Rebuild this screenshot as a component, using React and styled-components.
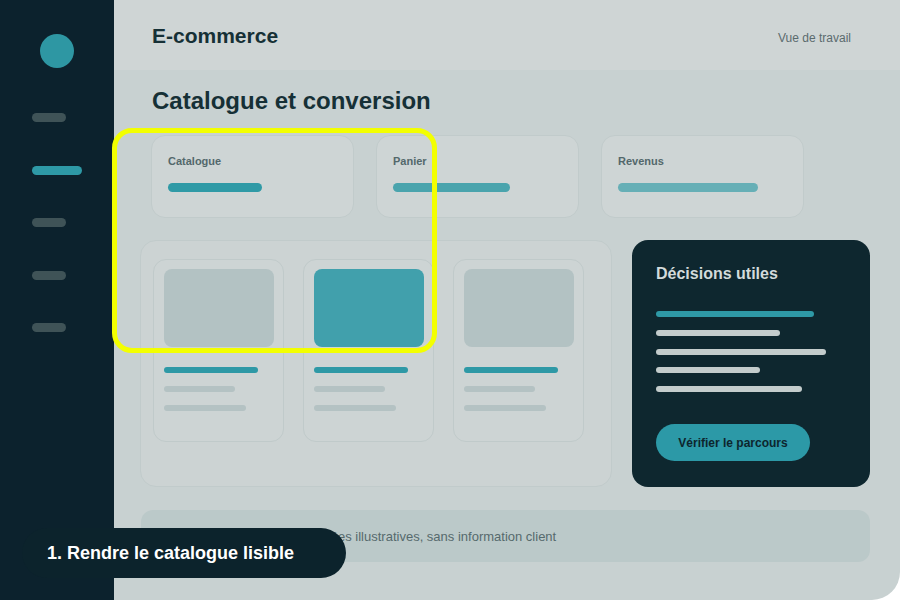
import React from "react";
import styled, { createGlobalStyle } from "styled-components";

const Global = createGlobalStyle`
  html, body { margin: 0; padding: 0; background: #ffffff; }
  body { font-family: "Liberation Sans", Arial, sans-serif; }
  * { box-sizing: border-box; }
`;

const Frame = styled.div`
  position: relative;
  width: 900px;
  height: 600px;
  display: flex;
  overflow: hidden;
  background: #c8d1d1;
  border-bottom-right-radius: 28px;
`;

const Sidebar = styled.aside`
  width: 114px;
  flex: none;
  background: #0c222d;
  display: flex;
  flex-direction: column;
  align-items: flex-start;
  padding: 34px 0 0 32px;
`;

const Avatar = styled.div`
  width: 34px;
  height: 34px;
  border-radius: 50%;
  background: #2e97a3;
  margin-left: 8px;
`;

const Nav = styled.div`
  display: flex;
  flex-direction: column;
  gap: 43.5px;
  margin-top: 45px;
`;

const NavBar = styled.div`
  height: 9px;
  border-radius: 5px;
  width: ${(p) => (p.$active ? 50 : 34)}px;
  background: ${(p) => (p.$active ? "#2e99a6" : "#3f5357")};
`;

const Main = styled.main`
  flex: 1;
  display: flex;
  flex-direction: column;
`;

const Header = styled.header`
  height: 70px;
  flex: none;
  background: #cfd5d5;
  display: flex;
  align-items: center;
  justify-content: space-between;
  padding: 0 49px 0 38px;
`;

const Brand = styled.h1`
  margin: 0;
  font-size: 21px;
  font-weight: 700;
  color: #163036;
  margin-top: 2px;
`;

const HeaderLink = styled.span`
  font-size: 12px;
  color: #5b6b6e;
  margin-top: 5px;
`;

const Content = styled.div`
  display: flex;
  flex-direction: column;
  padding: 0 30px 0 26px;
`;

const Title = styled.h2`
  margin: 17px 0 0 12px;
  font-size: 24px;
  line-height: 28px;
  font-weight: 700;
  color: #163036;
`;

const Stats = styled.div`
  display: flex;
  gap: 22px;
  margin: 20px 0 0 11px;
`;

const StatCard = styled.div`
  width: 203px;
  height: 83px;
  border-radius: 14px;
  border: 1px solid #c1cbcb;
  background: #ced5d5;
  padding: 19px 0 0 16px;
`;

const StatLabel = styled.div`
  font-size: 11px;
  font-weight: 700;
  color: #53686b;
`;

const StatBar = styled.div`
  height: 9px;
  border-radius: 5px;
  margin-top: 16px;
  background: ${(p) => p.$color};
`;

const Row = styled.div`
  display: flex;
  gap: 20px;
  margin-top: 22px;
`;

const Products = styled.section`
  width: 472px;
  height: 247px;
  border-radius: 16px;
  border: 1px solid #c1cbcb;
  background: #ccd3d3;
  display: flex;
  gap: 19px;
  padding: 18px 0 0 12px;
`;

const ProductCard = styled.div`
  width: 131px;
  height: 183px;
  border-radius: 13px;
  border: 1px solid #c0caca;
  background: #cdd4d4;
  padding: 9px 0 0 10px;
  display: flex;
  flex-direction: column;
`;

const ProductImage = styled.div`
  width: 110px;
  height: 78px;
  border-radius: 8px;
  background: ${(p) => (p.$accent ? "#41a0ac" : "#b3c2c3")};
`;

const Line = styled.div`
  height: 6px;
  border-radius: 3px;
  background: ${(p) => p.$color};
`;

const ProductLines = styled.div`
  display: flex;
  flex-direction: column;
  gap: 13px;
  margin-top: 20px;
`;

const Decisions = styled.section`
  width: 238px;
  height: 247px;
  border-radius: 16px;
  background: #0e272f;
  padding: 24px 0 0 24px;
  display: flex;
  flex-direction: column;
  align-items: flex-start;
`;

const DecisionTitle = styled.h3`
  margin: 0;
  font-size: 16px;
  line-height: 19px;
  font-weight: 700;
  color: #d3dbdb;
`;

const DecisionLines = styled.div`
  display: flex;
  flex-direction: column;
  gap: 12.8px;
  margin-top: 28px;
`;

const Button = styled.button`
  margin-top: 32px;
  width: 154px;
  height: 37px;
  border: none;
  border-radius: 19px;
  background: #2c99a7;
  color: #0d262e;
  font-family: "Liberation Sans", Arial, sans-serif;
  font-size: 12px;
  font-weight: 700;
  padding: 0;
`;

const Note = styled.div`
  margin: 23px 0 0 1px;
  height: 52px;
  border-radius: 12px;
  background: #bbc9c9;
  display: flex;
  align-items: center;
  gap: 8px;
  padding: 0 0 0 16px;
`;

const NoteDot = styled.div`
  width: 14px;
  height: 14px;
  border-radius: 50%;
  background: #2e99a6;
`;

const NoteText = styled.span`
  font-size: 13px;
  color: #566a6d;
`;

const Highlight = styled.div`
  position: absolute;
  left: 112px;
  top: 128px;
  width: 325px;
  height: 225px;
  border: 5px solid #f3ff00;
  border-radius: 20px;
  pointer-events: none;
`;

const Caption = styled.div`
  position: absolute;
  left: 22px;
  top: 528px;
  width: 324px;
  height: 50px;
  border-radius: 25px;
  background: #0c232c;
  color: #ffffff;
  font-size: 18px;
  font-weight: 700;
  display: flex;
  align-items: center;
  padding-left: 25px;
`;

const stats = [
  { label: "Catalogue", width: 94, color: "#2f9aa6" },
  { label: "Panier", width: 117, color: "#4aa4ad" },
  { label: "Revenus", width: 140, color: "#66afb6" },
];

const decisionLines = [
  { w: 158, c: "#2e99a6" },
  { w: 124, c: "#c3cccc" },
  { w: 170, c: "#c3cccc" },
  { w: 104, c: "#c3cccc" },
  { w: 146, c: "#c3cccc" },
];

export default function App() {
  return (
    <>
      <Global />
      <Frame>
        <Sidebar>
          <Avatar />
          <Nav>
            <NavBar />
            <NavBar $active />
            <NavBar />
            <NavBar />
            <NavBar />
          </Nav>
        </Sidebar>
        <Main>
          <Header>
            <Brand>E-commerce</Brand>
            <HeaderLink>Vue de travail</HeaderLink>
          </Header>
          <Content>
            <Title>Catalogue et conversion</Title>
            <Stats>
              {stats.map((s) => (
                <StatCard key={s.label}>
                  <StatLabel>{s.label}</StatLabel>
                  <StatBar $color={s.color} style={{ width: s.width }} />
                </StatCard>
              ))}
            </Stats>
            <Row>
              <Products>
                {[false, true, false].map((accent, i) => (
                  <ProductCard key={i}>
                    <ProductImage $accent={accent} />
                    <ProductLines>
                      <Line $color="#2e99a6" style={{ width: 94 }} />
                      <Line $color="#b4c2c3" style={{ width: 71 }} />
                      <Line $color="#b4c2c3" style={{ width: 82 }} />
                    </ProductLines>
                  </ProductCard>
                ))}
              </Products>
              <Decisions>
                <DecisionTitle>Décisions utiles</DecisionTitle>
                <DecisionLines>
                  {decisionLines.map((l, i) => (
                    <Line key={i} $color={l.c} style={{ width: l.w }} />
                  ))}
                </DecisionLines>
                <Button>Vérifier le parcours</Button>
              </Decisions>
            </Row>
            <Note>
              <NoteDot />
              <NoteText>Aperçu basé sur des données illustratives, sans information client</NoteText>
            </Note>
          </Content>
        </Main>
        <Highlight />
        <Caption>1. Rendre le catalogue lisible</Caption>
      </Frame>
    </>
  );
}
